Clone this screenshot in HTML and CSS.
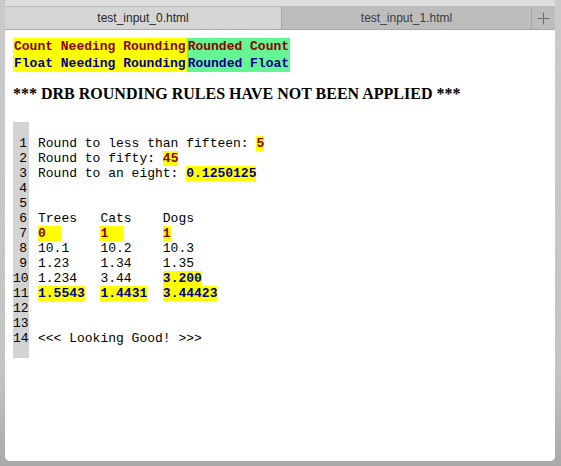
FILE: index.html
```html
<!DOCTYPE html>
<html>
<head>
<meta charset="utf-8">
<link rel="stylesheet" href="styles.css">
</head>
<body>
<div class="frame">
  <div class="window">
    <div class="toolbar-strip"></div>
    <div class="tabbar">
      <div class="tab tab-active">test_input_0.html</div>
      <div class="tab tab-inactive">test_input_1.html</div>
      <div class="tab-new">
        <svg width="13" height="13" viewBox="0 0 13 13"><path d="M6.5 0.5V12.5M0.5 6.5H12.5" stroke="#6e6e6e" stroke-width="1" fill="none"/></svg>
      </div>
    </div>
    <div class="content">
      <table class="legend">
        <tr>
          <td class="need count">Count Needing Rounding</td>
          <td class="done count">Rounded Count</td>
        </tr>
        <tr>
          <td class="need float">Float Needing Rounding</td>
          <td class="done float">Rounded Float</td>
        </tr>
      </table>
      <h3 class="title">*** DRB ROUNDING RULES HAVE NOT BEEN APPLIED ***</h3>
      <div class="listing">
        <div class="gutter">1
2
3
4
5
6
7
8
9
10
11
12
13
14</div>
        <pre class="code">Round to less than fifteen: <span class="hi c">5</span>
Round to fifty: <span class="hi c">45</span>
Round to an eight: <span class="hi f">0.1250125</span>


Trees   Cats    Dogs
<span class="hi c">0  </span>     <span class="hi c">1  </span>     <span class="hi c">1</span>
10.1    10.2    10.3
1.23    1.34    1.35
1.234   3.44    <span class="hi f">3.200</span>
<span class="hi f">1.5543</span>  <span class="hi f">1.4431</span>  <span class="hi f">3.44423</span>


&lt;&lt;&lt; Looking Good! &gt;&gt;&gt;</pre>
      </div>
    </div>
  </div>
</div>
</body>
</html>
```

FILE: styles.css
```css
html, body {
  margin: 0;
  padding: 0;
}
body {
  width: 561px;
  height: 466px;
  overflow: hidden;
  background: #bdbdbd;
}
.frame {
  width: 561px;
  height: 466px;
  box-sizing: border-box;
  padding: 0 6px 5px 5px;
  background: linear-gradient(to bottom, #cacaca 0%, #c4c4c4 80%, #a9a9a9 100%);
}
.window {
  width: 550px;
  height: 461px;
  display: flex;
  flex-direction: column;
  border-radius: 0 0 5px 5px;
  background: #ffffff;
  overflow: hidden;
}
.toolbar-strip {
  height: 6px;
  background: #dfdedf;
  border-bottom: 1px solid #bdbcbd;
}
.tabbar {
  height: 22px;
  display: flex;
  border-bottom: 1px solid #a9a8a9;
  font-family: "Liberation Sans", Arial, sans-serif;
  font-size: 12px;
}
.tab {
  display: flex;
  align-items: center;
  justify-content: center;
}
.tab-active {
  width: 276px;
  background: #d6d5d6;
  color: #262626;
}
.tab-inactive {
  width: 249px;
  border-left: 1px solid #a9a8a9;
  background: #bebdbe;
  color: #3c3c3c;
}
.tab-new {
  flex: 1;
  border-left: 1px solid #a9a8a9;
  background: #bebdbe;
  display: flex;
  align-items: center;
  justify-content: center;
}
.content {
  flex: 1;
  padding: 8px;
  background: #ffffff;
}
.legend {
  border-collapse: collapse;
  font-family: "Liberation Mono", "Courier New", monospace;
  font-size: 13px;
  font-weight: bold;
  line-height: 15px;
}
.legend td {
  padding: 1px;
  white-space: pre;
}
.need { background: #ffff00; }
.done { background: #66f593; }
.count { color: #8b0000; }
.float { color: #00008b; }
.title {
  font-family: "Liberation Serif", "Times New Roman", serif;
  font-size: 16px;
  line-height: 18px;
  font-weight: bold;
  margin: 13px 0 19px;
  color: #000;
}
.listing {
  display: flex;
  align-items: flex-start;
  font-family: "Liberation Mono", "Courier New", monospace;
  font-size: 13px;
  line-height: 15px;
  color: #000;
}
.gutter {
  width: 16px;
  box-sizing: border-box;
  padding: 14px 2px 12px 0;
  background: #d3d3d3;
  text-align: right;
  white-space: pre;
}
.code {
  margin: 14px 0 0 9px;
  font: inherit;
  white-space: pre;
}
.hi {
  background: #ffff00;
  font-weight: bold;
}
.hi.c { color: #8b0000; }
.hi.f { color: #00008b; }
```
